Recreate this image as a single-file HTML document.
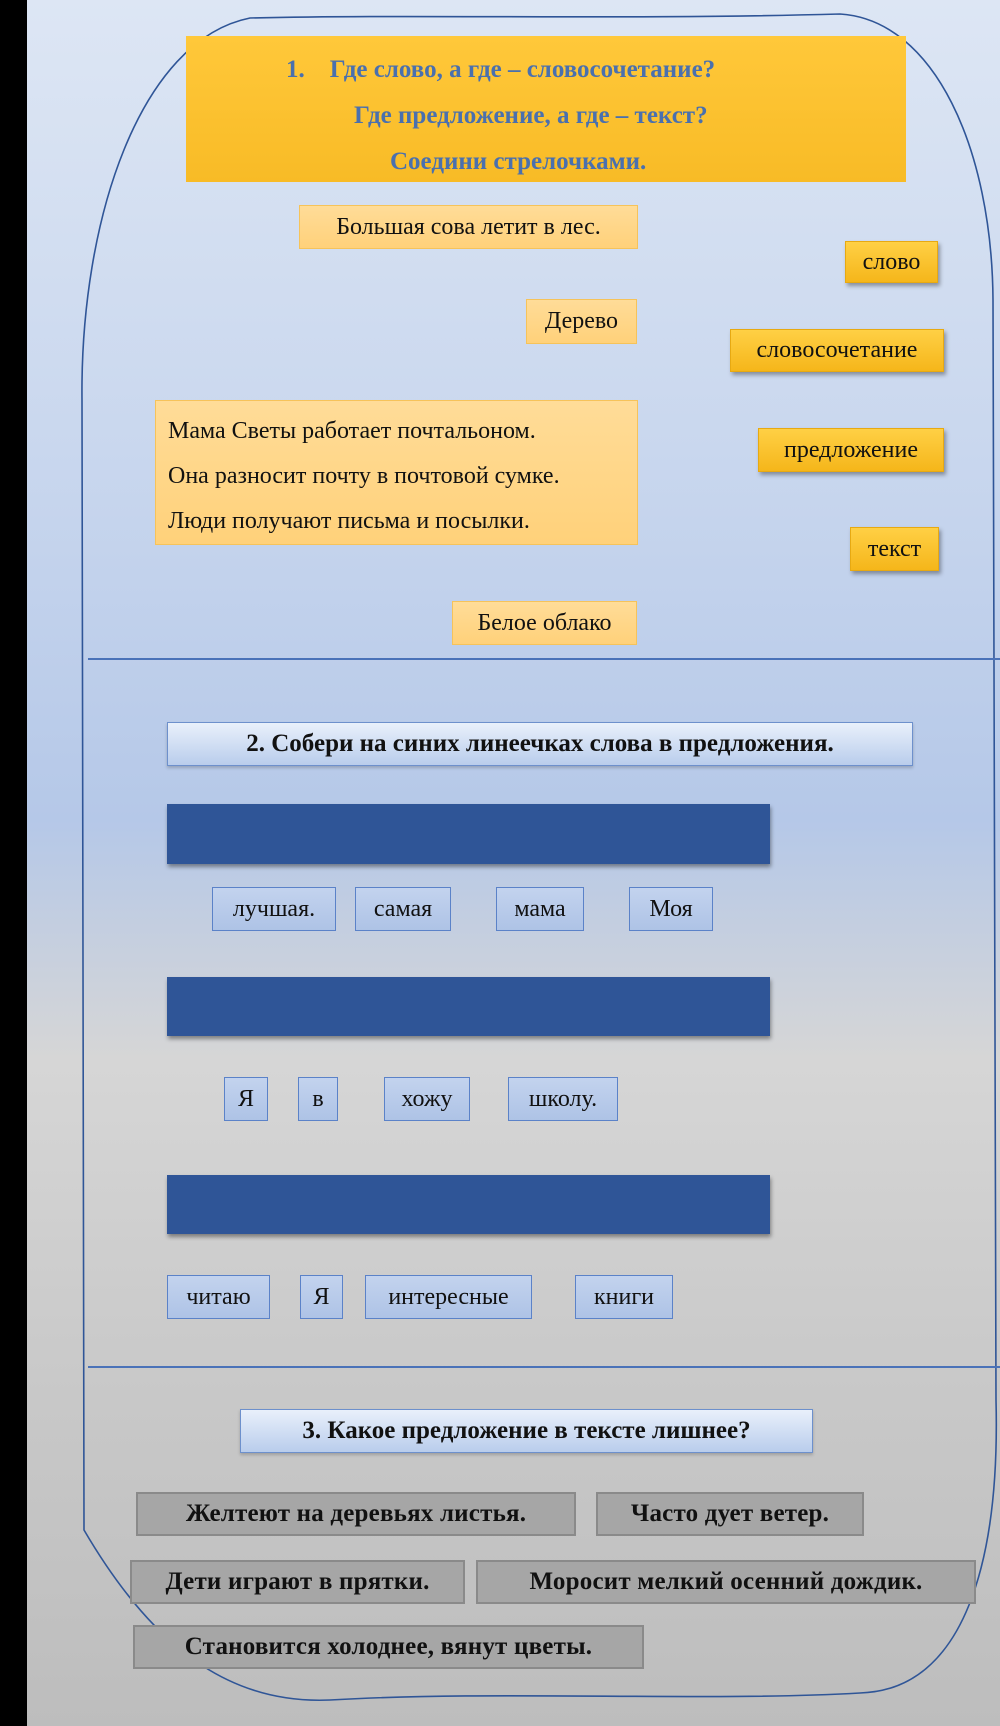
<!DOCTYPE html>
<html><head><meta charset="utf-8"><style>
*{margin:0;padding:0;box-sizing:border-box}
body{width:1000px;height:1726px;position:relative;overflow:hidden;font-family:"Liberation Serif","DejaVu Serif",serif;
background:linear-gradient(180deg,#dde6f4 0px,#c9d7ee 450px,#b5c8e8 820px,#d6d6d6 1060px,#c8c8c8 1400px,#bdbdbd 1726px);}
.bar{position:absolute;left:0;top:0;width:27px;height:1726px;background:#000}
.b{position:absolute;display:flex;align-items:center;justify-content:center;white-space:nowrap;color:#111}
.o{background:linear-gradient(#ffdc98,#ffd17a);border:1px solid #f6c35a;font-size:24px}
.y{background:linear-gradient(#ffd045,#f5b61a);border:1px solid #e7a912;font-size:24px;box-shadow:2px 3px 4px rgba(0,0,0,.35)}
.w{background:linear-gradient(#c3d3ee,#aec3e6);border:1px solid #5b82c8;font-size:24px}
.h{background:linear-gradient(#e9f0fb,#b9cdec);border:1px solid #6d90cc;font-size:25px;font-weight:bold;box-shadow:0 2px 3px rgba(0,0,0,.2)}
.g{background:#a6a6a6;border:2px solid #8a8a8a;font-size:25px;font-weight:bold;letter-spacing:.2px}
.blue{position:absolute;background:#2f5597;box-shadow:1px 3px 4px rgba(0,0,0,.4)}
.hr{position:absolute;left:88px;right:0;height:2px;background:#4a72b8}
</style></head><body>
<div class="bar"></div>
<svg width="1000" height="1726" style="position:absolute;left:0;top:0">
<path d="M250,18 C420,14 620,20 840,14 C935,20 992,150 993,300 L996,1400 C1000,1560 965,1690 860,1693 C700,1702 500,1690 330,1700 C240,1704 160,1660 84,1530 L82,400 C80,220 140,40 250,18 Z" fill="none" stroke="#2f5597" stroke-width="1.6"/>
</svg>
<div style="position:absolute;left:186px;top:36px;width:720px;height:146px;background:linear-gradient(#ffc83a,#f8bb26);color:#4a70ae;font-weight:bold;font-size:25px">
<div style="position:absolute;left:100px;top:20px">1.&nbsp;&nbsp;&nbsp;&nbsp;Где слово, а где – словосочетание?</div>
<div style="position:absolute;left:168px;top:66px">Где предложение, а где – текст?</div>
<div style="position:absolute;left:204px;top:112px">Соедини стрелочками.</div>
</div>
<div class="b o" style="left:299px;top:205px;width:339px;height:44px">Большая сова летит в лес.</div>
<div class="b o" style="left:526px;top:299px;width:111px;height:45px">Дерево</div>
<div class="b o" style="left:155px;top:400px;width:483px;height:145px;display:block;padding:8px 0 0 12px;line-height:45px">Мама Светы работает почтальоном.<br>Она разносит почту в почтовой сумке.<br>Люди получают письма и посылки.</div>
<div class="b o" style="left:452px;top:601px;width:185px;height:44px">Белое облако</div>
<div class="b y" style="left:845px;top:241px;width:93px;height:42px">слово</div>
<div class="b y" style="left:730px;top:329px;width:214px;height:43px">словосочетание</div>
<div class="b y" style="left:758px;top:428px;width:186px;height:44px">предложение</div>
<div class="b y" style="left:850px;top:527px;width:89px;height:44px">текст</div>
<div class="hr" style="top:658px"></div>
<div class="b h" style="left:167px;top:722px;width:746px;height:44px">2. Собери на синих линеечках слова в предложения.</div>
<div class="blue" style="left:167px;top:804px;width:603px;height:60px"></div>
<div class="b w" style="left:212px;top:887px;width:124px;height:44px">лучшая.</div>
<div class="b w" style="left:355px;top:887px;width:96px;height:44px">самая</div>
<div class="b w" style="left:496px;top:887px;width:88px;height:44px">мама</div>
<div class="b w" style="left:629px;top:887px;width:84px;height:44px">Моя</div>
<div class="blue" style="left:167px;top:977px;width:603px;height:59px"></div>
<div class="b w" style="left:224px;top:1077px;width:44px;height:44px">Я</div>
<div class="b w" style="left:298px;top:1077px;width:40px;height:44px">в</div>
<div class="b w" style="left:384px;top:1077px;width:86px;height:44px">хожу</div>
<div class="b w" style="left:508px;top:1077px;width:110px;height:44px">школу.</div>
<div class="blue" style="left:167px;top:1175px;width:603px;height:59px"></div>
<div class="b w" style="left:167px;top:1275px;width:103px;height:44px">читаю</div>
<div class="b w" style="left:300px;top:1275px;width:43px;height:44px">Я</div>
<div class="b w" style="left:365px;top:1275px;width:167px;height:44px">интересные</div>
<div class="b w" style="left:575px;top:1275px;width:98px;height:44px">книги</div>
<div class="hr" style="top:1366px"></div>
<div class="b h" style="left:240px;top:1409px;width:573px;height:44px">3. Какое предложение в тексте лишнее?</div>
<div class="b g" style="left:136px;top:1492px;width:440px;height:44px">Желтеют на деревьях листья.</div>
<div class="b g" style="left:596px;top:1492px;width:268px;height:44px">Часто дует ветер.</div>
<div class="b g" style="left:130px;top:1560px;width:335px;height:44px">Дети играют в прятки.</div>
<div class="b g" style="left:476px;top:1560px;width:500px;height:44px">Моросит мелкий осенний дождик.</div>
<div class="b g" style="left:133px;top:1625px;width:511px;height:44px">Становится холоднее, вянут цветы.</div>
</body></html>
